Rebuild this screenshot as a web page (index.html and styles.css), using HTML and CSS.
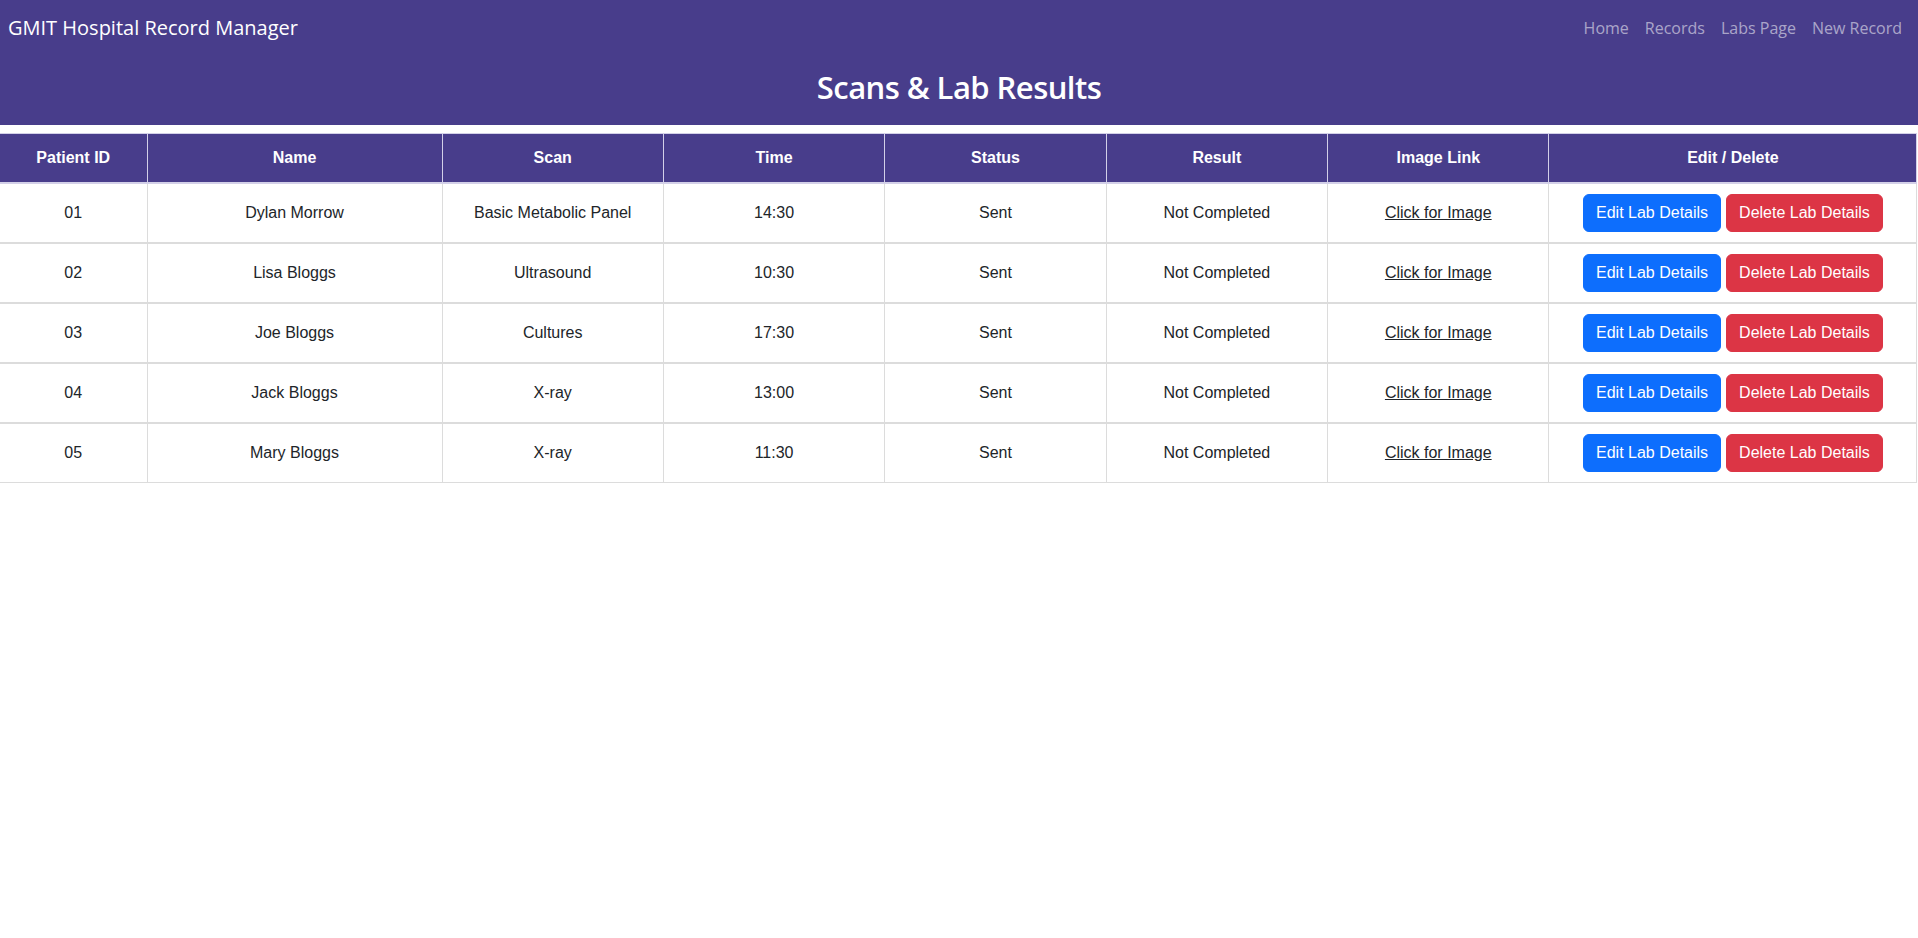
FILE: index.html
```html
<!DOCTYPE html>
<html lang="en">
<head>
<meta charset="utf-8">
<title>Scans &amp; Lab Results</title>
<link rel="stylesheet" href="styles.css">
</head>
<body>
<header class="top">
  <nav class="navbar">
    <a class="brand" href="#">GMIT Hospital Record Manager</a>
    <ul class="nav-links">
      <li><a href="#">Home</a></li>
      <li><a href="#">Records</a></li>
      <li><a href="#">Labs Page</a></li>
      <li><a href="#">New Record</a></li>
    </ul>
  </nav>
  <h1 class="page-title">Scans &amp; Lab Results</h1>
</header>
<main class="content">
  <table class="labs">
    <colgroup>
      <col class="c-id">
      <col class="c-name">
      <col class="c-std">
      <col class="c-std">
      <col class="c-std">
      <col class="c-std">
      <col class="c-std">
      <col class="c-actions">
    </colgroup>
    <thead>
      <tr>
        <th>Patient ID</th>
        <th>Name</th>
        <th>Scan</th>
        <th>Time</th>
        <th>Status</th>
        <th>Result</th>
        <th>Image Link</th>
        <th>Edit / Delete</th>
      </tr>
    </thead>
    <tbody>
      <tr>
        <td>01</td><td>Dylan Morrow</td><td>Basic Metabolic Panel</td><td>14:30</td><td>Sent</td><td>Not Completed</td>
        <td><a class="img-link" href="#">Click for Image</a></td>
        <td><div class="actions"><button class="btn btn-edit">Edit Lab Details</button><button class="btn btn-delete">Delete Lab Details</button></div></td>
      </tr>
      <tr>
        <td>02</td><td>Lisa Bloggs</td><td>Ultrasound</td><td>10:30</td><td>Sent</td><td>Not Completed</td>
        <td><a class="img-link" href="#">Click for Image</a></td>
        <td><div class="actions"><button class="btn btn-edit">Edit Lab Details</button><button class="btn btn-delete">Delete Lab Details</button></div></td>
      </tr>
      <tr>
        <td>03</td><td>Joe Bloggs</td><td>Cultures</td><td>17:30</td><td>Sent</td><td>Not Completed</td>
        <td><a class="img-link" href="#">Click for Image</a></td>
        <td><div class="actions"><button class="btn btn-edit">Edit Lab Details</button><button class="btn btn-delete">Delete Lab Details</button></div></td>
      </tr>
      <tr>
        <td>04</td><td>Jack Bloggs</td><td>X-ray</td><td>13:00</td><td>Sent</td><td>Not Completed</td>
        <td><a class="img-link" href="#">Click for Image</a></td>
        <td><div class="actions"><button class="btn btn-edit">Edit Lab Details</button><button class="btn btn-delete">Delete Lab Details</button></div></td>
      </tr>
      <tr>
        <td>05</td><td>Mary Bloggs</td><td>X-ray</td><td>11:30</td><td>Sent</td><td>Not Completed</td>
        <td><a class="img-link" href="#">Click for Image</a></td>
        <td><div class="actions"><button class="btn btn-edit">Edit Lab Details</button><button class="btn btn-delete">Delete Lab Details</button></div></td>
      </tr>
    </tbody>
  </table>
</main>
</body>
</html>
```
FILE: styles.css
```css
* { box-sizing: border-box; }

html, body {
  margin: 0;
  padding: 0;
  background: #ffffff;
}

body {
  font-family: "Liberation Sans", Arial, sans-serif;
  font-size: 16px;
  line-height: 1.5;
  color: #212529;
}

.top {
  background: #483d8b;
  padding-bottom: 19px;
}

.navbar {
  display: flex;
  align-items: center;
  justify-content: space-between;
  padding: 8px 8px 0 8px;
  height: 58px;
}

.brand {
  font-family: "Open Sans", "Noto Sans", sans-serif;
  font-size: 20px;
  line-height: 30px;
  color: #ffffff;
  text-decoration: none;
  margin-top: -11px;
}

.nav-links {
  list-style: none;
  display: flex;
  margin: 0;
  padding: 0;
  margin-top: -11px;
}

.nav-links a {
  display: block;
  font-family: "Open Sans", "Noto Sans", sans-serif;
  font-size: 16px;
  line-height: 24px;
  padding: 0 8px;
  color: rgba(255, 255, 255, 0.55);
  text-decoration: none;
}

.page-title {
  margin: 10px 0 0 0;
  text-align: center;
  font-family: "Open Sans", "Noto Sans", sans-serif;
  font-weight: 600;
  font-size: 31px;
  line-height: 38px;
  color: #ffffff;
  letter-spacing: -0.55px;
}

.content {
  padding-top: 8px;
}

.labs {
  width: 1917px;
  border-collapse: collapse;
  table-layout: fixed;
  text-align: center;
}

.c-id { width: 147px; }
.c-name { width: 295px; }
.c-std { width: 221.4px; }
.c-actions { width: 368px; }

.labs th {
  background: #483d8b;
  color: #ffffff;
  font-weight: 700;
  padding: 12px 8px;
  line-height: 24px;
  border: 1px solid #d3d0e8;
  border-bottom: 2px solid #d3d0e8;
}

.labs td {
  padding: 10px 8px;
  line-height: 24px;
  vertical-align: middle;
  border-left: 1px solid #dcdcdc;
  border-right: 1px solid #dcdcdc;
  border-bottom: 2px solid #dcdcdc;
}

.labs td:first-child { border-left: 0; }
.labs th:first-child { border-left: 0; }

.labs tbody tr:last-child td {
  border-bottom: 1px solid #dcdcdc;
}

.img-link {
  color: #212529;
  text-decoration: underline;
}

.actions {
  display: flex;
  justify-content: center;
  gap: 5px;
}

.btn {
  font-family: "Liberation Sans", Arial, sans-serif;
  font-size: 16px;
  line-height: 24px;
  padding: 6px 12px;
  border: 1px solid transparent;
  border-radius: 6px;
  color: #ffffff;
  cursor: pointer;
}

.btn-edit {
  background: #0d6efd;
  border-color: #0d6efd;
}

.btn-delete {
  background: #dc3545;
  border-color: #dc3545;
}
```
